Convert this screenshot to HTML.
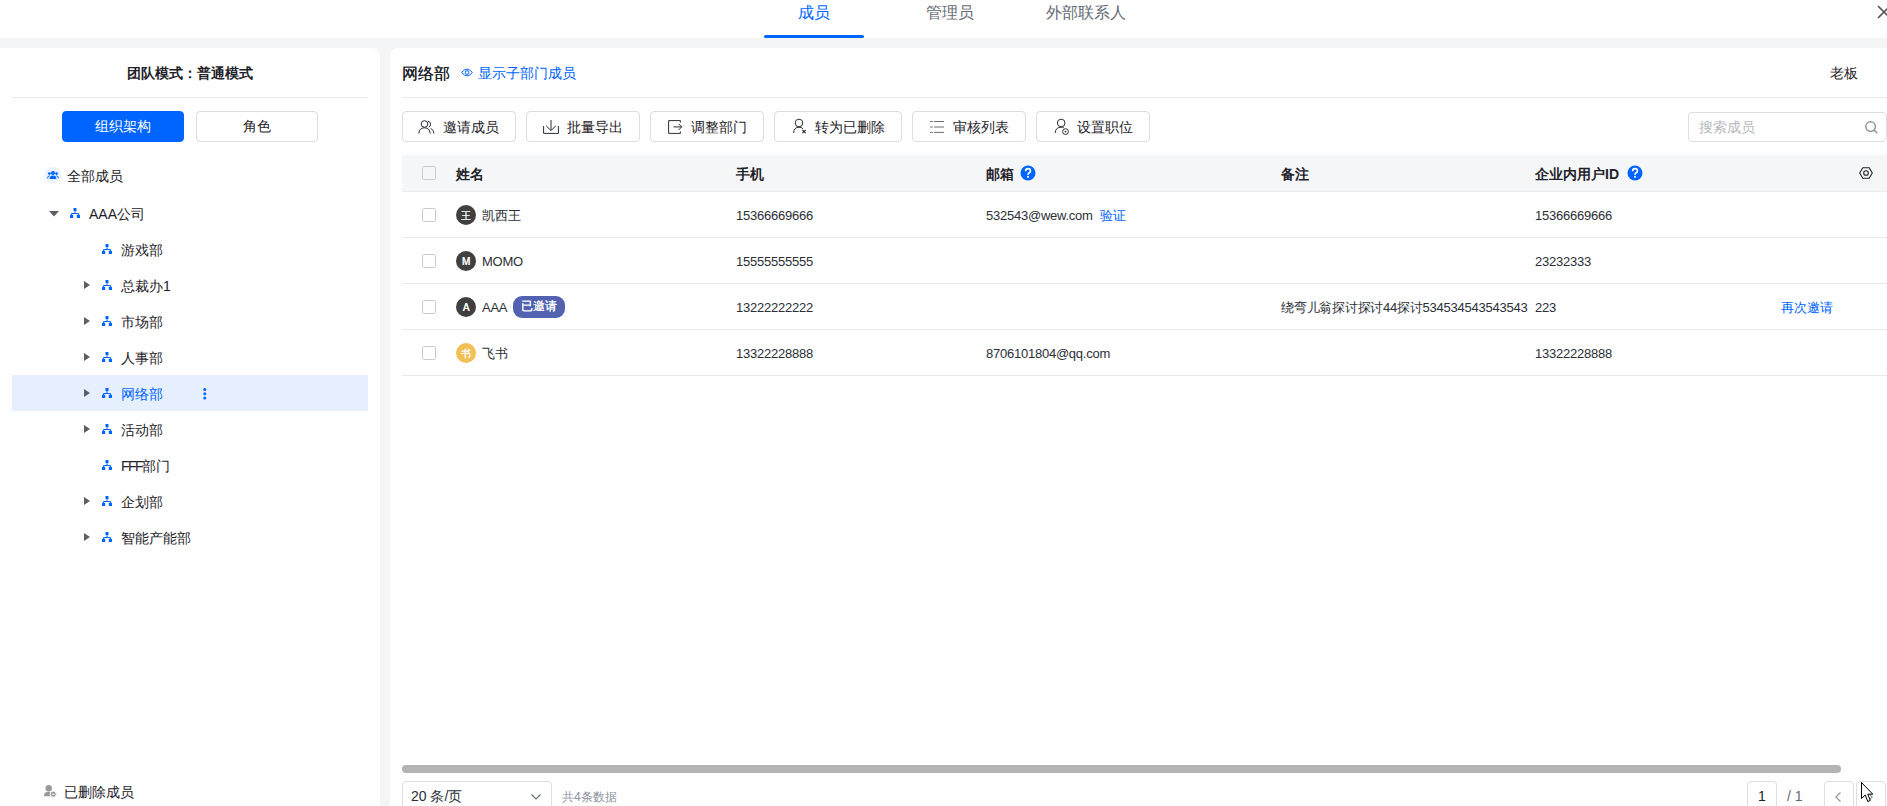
<!DOCTYPE html>
<html><head><meta charset="utf-8">
<style>
*{box-sizing:border-box;margin:0;padding:0}
html,body{width:1887px;height:806px;overflow:hidden;background:#f4f5f7;font-family:"Liberation Sans",sans-serif;color:#1f2329}
#top{position:absolute;left:0;top:0;width:1887px;height:38px;background:#fefefe}
.tab{position:absolute;top:2px;font-size:16px;line-height:22px;color:#646a73;white-space:nowrap}
.tab.on{color:#0064ff}
#uline{position:absolute;left:764px;top:35px;width:100px;height:3px;border-radius:2px;background:#0064ff}
#left{position:absolute;left:0;top:48px;width:380px;height:758px;background:#fefefe;border-radius:0 8px 0 0}
#right{position:absolute;left:390px;top:48px;width:1497px;height:758px;background:#fefefe;border-radius:8px 0 0 0}
.t{position:absolute;white-space:nowrap;line-height:20px;font-size:14px}
.hl{position:absolute;background:#e6effd}
.line{position:absolute;height:1px;background:#e9e9ea}
.btn{position:absolute;height:31px;border:1px solid #dcdde0;border-radius:4px;background:#fefefe}
svg{position:absolute;overflow:visible}
.org{width:10px;height:10px}
.caret-r{position:absolute;width:0;height:0;border-top:4.5px solid transparent;border-bottom:4.5px solid transparent;border-left:6px solid #5c5f66}
.cb{position:absolute;width:14px;height:14px;border:1.3px solid #cdcac8;border-radius:1.5px}
.av{position:absolute;width:20px;height:20px;border-radius:50%;background:#3f3f3f;color:#fff;font-size:10px;line-height:21px;text-align:center;text-shadow:0.4px 0 0 #fff}
.cell{position:absolute;white-space:nowrap;font-size:13px;line-height:20px;color:#2b2f36;letter-spacing:-0.24px}
.th{position:absolute;white-space:nowrap;font-size:14px;line-height:20px;font-weight:bold;color:#1f2329}
.blue{color:#0064ff}
</style></head><body>
<!-- top tabs -->
<div id="top">
  <div class="tab on" style="left:798px">成员</div>
  <div class="tab" style="left:926px">管理员</div>
  <div class="tab" style="left:1046px">外部联系人</div>
  <div id="uline"></div>
  <svg style="left:1878px;top:6px" width="12" height="12" viewBox="0 0 12 12"><path d="M0.5 0.5L11.5 11.5M11.5 0.5L0.5 11.5" stroke="#4e5358" stroke-width="1.7" stroke-linecap="round"/></svg>
</div>

<!-- LEFT PANEL -->
<div id="left"></div>
<div class="t" style="left:127px;top:63px;font-weight:bold">团队模式：普通模式</div>
<div class="line" style="left:12px;top:97px;width:356px"></div>
<div class="btn" style="left:62px;top:111px;width:122px;background:#0064ff;border-color:#0064ff"></div>
<div class="t" style="left:95px;top:116px;color:#fff">组织架构</div>
<div class="btn" style="left:196px;top:111px;width:122px"></div>
<div class="t" style="left:243px;top:116px">角色</div>

<!-- tree -->
<div class="hl" style="left:12px;top:375px;width:356px;height:36px"></div>

<div style="position:absolute;left:45px;top:167px;width:16px;height:16px;border-radius:50%;background:#e9f2ff"></div>
<svg style="left:47px;top:171px" width="12" height="8" viewBox="0 0 12 8"><circle cx="6" cy="2" r="2" fill="#0064ff"/><circle cx="2.4" cy="2.6" r="1.4" fill="#0064ff"/><circle cx="9.6" cy="2.6" r="1.4" fill="#0064ff"/><path d="M2.6 8Q2.6 4.6 6 4.6Q9.4 4.6 9.4 8Z" fill="#0064ff"/><path d="M0.5 7.3Q0.6 5 2.6 4.8M11.5 7.3Q11.4 5 9.4 4.8" stroke="#0064ff" stroke-width="1" fill="none"/></svg>
<div class="t" style="left:67px;top:166px">全部成员</div>

<svg style="left:49px;top:211px" width="10" height="6" viewBox="0 0 10 6"><path d="M0 0H10L5 5.5Z" fill="#5c5f66"/></svg>
<svg class="org" style="left:70px;top:208px" viewBox="0 0 10 10"><rect x="3.5" y="0" width="3" height="3" fill="#0064ff"/><rect x="0" y="6.8" width="3.2" height="3.2" fill="#0064ff"/><rect x="6.8" y="6.8" width="3.2" height="3.2" fill="#0064ff"/><path d="M5 3V5.5M1.6 7V5.5H8.4V7" stroke="#0064ff" stroke-width="1" fill="none"/></svg>
<div class="t" style="left:89px;top:204px">AAA公司</div>

<svg class="org" style="left:102px;top:244px" viewBox="0 0 10 10"><rect x="3.5" y="0" width="3" height="3" fill="#0064ff"/><rect x="0" y="6.8" width="3.2" height="3.2" fill="#0064ff"/><rect x="6.8" y="6.8" width="3.2" height="3.2" fill="#0064ff"/><path d="M5 3V5.5M1.6 7V5.5H8.4V7" stroke="#0064ff" stroke-width="1" fill="none"/></svg>
<div class="t" style="left:121px;top:240px">游戏部</div>
<div class="caret-r" style="left:84px;top:280.5px"></div>
<svg class="org" style="left:102px;top:280px" viewBox="0 0 10 10"><rect x="3.5" y="0" width="3" height="3" fill="#0064ff"/><rect x="0" y="6.8" width="3.2" height="3.2" fill="#0064ff"/><rect x="6.8" y="6.8" width="3.2" height="3.2" fill="#0064ff"/><path d="M5 3V5.5M1.6 7V5.5H8.4V7" stroke="#0064ff" stroke-width="1" fill="none"/></svg>
<div class="t" style="left:121px;top:276px">总裁办1</div>
<div class="caret-r" style="left:84px;top:316.5px"></div>
<svg class="org" style="left:102px;top:316px" viewBox="0 0 10 10"><rect x="3.5" y="0" width="3" height="3" fill="#0064ff"/><rect x="0" y="6.8" width="3.2" height="3.2" fill="#0064ff"/><rect x="6.8" y="6.8" width="3.2" height="3.2" fill="#0064ff"/><path d="M5 3V5.5M1.6 7V5.5H8.4V7" stroke="#0064ff" stroke-width="1" fill="none"/></svg>
<div class="t" style="left:121px;top:312px">市场部</div>
<div class="caret-r" style="left:84px;top:352.5px"></div>
<svg class="org" style="left:102px;top:352px" viewBox="0 0 10 10"><rect x="3.5" y="0" width="3" height="3" fill="#0064ff"/><rect x="0" y="6.8" width="3.2" height="3.2" fill="#0064ff"/><rect x="6.8" y="6.8" width="3.2" height="3.2" fill="#0064ff"/><path d="M5 3V5.5M1.6 7V5.5H8.4V7" stroke="#0064ff" stroke-width="1" fill="none"/></svg>
<div class="t" style="left:121px;top:348px">人事部</div>
<div class="caret-r" style="left:84px;top:388.5px"></div>
<svg class="org" style="left:102px;top:388px" viewBox="0 0 10 10"><rect x="3.5" y="0" width="3" height="3" fill="#0064ff"/><rect x="0" y="6.8" width="3.2" height="3.2" fill="#0064ff"/><rect x="6.8" y="6.8" width="3.2" height="3.2" fill="#0064ff"/><path d="M5 3V5.5M1.6 7V5.5H8.4V7" stroke="#0064ff" stroke-width="1" fill="none"/></svg>
<div class="t" style="left:121px;top:384px;color:#0064ff">网络部</div>
<div class="caret-r" style="left:84px;top:424.5px"></div>
<svg class="org" style="left:102px;top:424px" viewBox="0 0 10 10"><rect x="3.5" y="0" width="3" height="3" fill="#0064ff"/><rect x="0" y="6.8" width="3.2" height="3.2" fill="#0064ff"/><rect x="6.8" y="6.8" width="3.2" height="3.2" fill="#0064ff"/><path d="M5 3V5.5M1.6 7V5.5H8.4V7" stroke="#0064ff" stroke-width="1" fill="none"/></svg>
<div class="t" style="left:121px;top:420px">活动部</div>
<svg class="org" style="left:102px;top:460px" viewBox="0 0 10 10"><rect x="3.5" y="0" width="3" height="3" fill="#0064ff"/><rect x="0" y="6.8" width="3.2" height="3.2" fill="#0064ff"/><rect x="6.8" y="6.8" width="3.2" height="3.2" fill="#0064ff"/><path d="M5 3V5.5M1.6 7V5.5H8.4V7" stroke="#0064ff" stroke-width="1" fill="none"/></svg>
<div class="t" style="left:121px;top:456px"><span style="letter-spacing:-1.6px">FFF</span>部门</div>
<div class="caret-r" style="left:84px;top:496.5px"></div>
<svg class="org" style="left:102px;top:496px" viewBox="0 0 10 10"><rect x="3.5" y="0" width="3" height="3" fill="#0064ff"/><rect x="0" y="6.8" width="3.2" height="3.2" fill="#0064ff"/><rect x="6.8" y="6.8" width="3.2" height="3.2" fill="#0064ff"/><path d="M5 3V5.5M1.6 7V5.5H8.4V7" stroke="#0064ff" stroke-width="1" fill="none"/></svg>
<div class="t" style="left:121px;top:492px">企划部</div>
<div class="caret-r" style="left:84px;top:532.5px"></div>
<svg class="org" style="left:102px;top:532px" viewBox="0 0 10 10"><rect x="3.5" y="0" width="3" height="3" fill="#0064ff"/><rect x="0" y="6.8" width="3.2" height="3.2" fill="#0064ff"/><rect x="6.8" y="6.8" width="3.2" height="3.2" fill="#0064ff"/><path d="M5 3V5.5M1.6 7V5.5H8.4V7" stroke="#0064ff" stroke-width="1" fill="none"/></svg>
<div class="t" style="left:121px;top:528px">智能产能部</div>


<svg style="left:203px;top:388px" width="4" height="12" viewBox="0 0 4 12"><circle cx="1.75" cy="1.6" r="1.5" fill="#0064ff"/><circle cx="1.75" cy="5.8" r="1.5" fill="#0064ff"/><circle cx="1.75" cy="10" r="1.5" fill="#0064ff"/></svg>
<!-- deleted members -->
<svg style="left:43px;top:784px" width="14" height="14" viewBox="0 0 14 14"><circle cx="5.7" cy="4.2" r="3.2" fill="#9a9a9a"/><path d="M0.8 12.2Q1.2 7.8 5.7 7.8Q7.6 7.8 8.8 8.6L8.2 12.2Z" fill="#9a9a9a"/><circle cx="10.2" cy="10.2" r="3.1" fill="#9a9a9a" stroke="#fefefe" stroke-width="1"/><path d="M8.8 10.3H11.6" stroke="#fff" stroke-width="1"/></svg>
<div class="t" style="left:64px;top:782px">已删除成员</div>

<!-- RIGHT PANEL -->
<div id="right"></div>
<div class="t" style="left:402px;top:63px;font-size:16px;line-height:22px;text-shadow:0.45px 0 0 #1f2329">网络部</div>
<svg style="left:461px;top:68px" width="12" height="9" viewBox="0 0 12 9"><path d="M0.6 4.5Q6 -2.2 11.4 4.5Q6 11.2 0.6 4.5Z" stroke="#0064ff" stroke-width="1" fill="none"/><circle cx="6" cy="4.5" r="1.8" stroke="#0064ff" stroke-width="1" fill="none"/></svg>
<div class="t blue" style="left:478px;top:63px">显示子部门成员</div>
<div class="t" style="left:1830px;top:63px">老板</div>
<div class="line" style="left:402px;top:97px;width:1485px"></div>

<!-- toolbar -->
<div class="btn" style="left:402px;top:111px;width:114px"></div>
<svg style="left:418px;top:120px" width="18" height="14" viewBox="0 0 18 14"><circle cx="6.5" cy="4" r="3.3" stroke="#2b2e33" stroke-width="1" fill="none"/><path d="M0.8 13.5Q1.3 7.8 6.5 7.8Q11.7 7.8 12.2 13.5" stroke="#2b2e33" stroke-width="1" fill="none"/><path d="M9.8 1.2Q12.6 1.6 12.6 4.2Q12.6 6.3 10.8 7.2M12.6 8.4Q15.8 9.8 16 13.5" stroke="#2b2e33" stroke-width="1" fill="none"/></svg>
<div class="t" style="left:443px;top:117px">邀请成员</div>

<div class="btn" style="left:526px;top:111px;width:114px"></div>
<svg style="left:543px;top:120px" width="16" height="14" viewBox="0 0 16 14"><path d="M0.6 6V13.4H15.4V6" stroke="#2b2e33" stroke-width="1" fill="none"/><path d="M8 0V10.4M3.2 5.8L8 10.6L12.8 5.8" stroke="#2b2e33" stroke-width="1" fill="none"/></svg>
<div class="t" style="left:567px;top:117px">批量导出</div>

<div class="btn" style="left:650px;top:111px;width:114px"></div>
<svg style="left:668px;top:120px" width="15" height="14" viewBox="0 0 15 14"><path d="M12.4 2.5V0.6H0.6V13.4H12.4V11.5" stroke="#2b2e33" stroke-width="1" fill="none"/><path d="M5.5 6.9H13.6M10.6 3.8L13.7 6.9L10.6 10" stroke="#2b2e33" stroke-width="1" fill="none"/></svg>
<div class="t" style="left:691px;top:117px">调整部门</div>

<div class="btn" style="left:774px;top:111px;width:128px"></div>
<svg style="left:793px;top:119px" width="14" height="15" viewBox="0 0 14 15"><circle cx="6" cy="4" r="3.8" stroke="#2b2e33" stroke-width="1" fill="none"/><path d="M0.6 14Q0.9 8.2 6 8.2Q8.6 8.2 10 9.8" stroke="#2b2e33" stroke-width="1" fill="none"/><path d="M9.4 11L12.6 14.2M12.6 11L9.4 14.2" stroke="#2b2e33" stroke-width="1.2" fill="none"/></svg>
<div class="t" style="left:815px;top:117px">转为已删除</div>

<div class="btn" style="left:912px;top:111px;width:114px"></div>
<svg style="left:930px;top:120px" width="15" height="14" viewBox="0 0 15 14"><path d="M0 1.5H2.8M4 1.5H14M0 7H2.8M4 7H14M0 12.4H2.8M4 12.4H14" stroke="#6b6e75" stroke-width="1" fill="none"/></svg>
<div class="t" style="left:953px;top:117px">审核列表</div>

<div class="btn" style="left:1036px;top:111px;width:114px"></div>
<svg style="left:1054px;top:119px" width="16" height="16" viewBox="0 0 16 16"><circle cx="7.2" cy="4" r="3.8" stroke="#2b2e33" stroke-width="1" fill="none"/><path d="M1.2 14Q1.5 8.2 7.2 8.2Q8.6 8.2 9.8 8.8" stroke="#2b2e33" stroke-width="1" fill="none"/><circle cx="11.5" cy="12.6" r="2.9" stroke="#2b2e33" stroke-width="1" fill="none"/><circle cx="11.5" cy="12.6" r="0.9" fill="#2b2e33"/></svg>
<div class="t" style="left:1077px;top:117px">设置职位</div>

<!-- search -->
<div class="btn" style="left:1688px;top:112px;width:199px;height:30px;border-radius:4px 5px 5px 4px"></div>
<div class="t" style="left:1699px;top:117px;color:#b8babf">搜索成员</div>
<svg style="left:1865px;top:121px" width="13" height="13" viewBox="0 0 13 13"><circle cx="5.6" cy="5.6" r="4.8" stroke="#8f959e" stroke-width="1.5" fill="none"/><path d="M9.2 9.2L11.8 11.8" stroke="#8f959e" stroke-width="1.6" stroke-linecap="round"/></svg>

<!-- table header -->
<div style="position:absolute;left:402px;top:155px;width:1485px;height:37px;background:#f5f6f8;border-bottom:1px solid #ebebeb"></div>
<div class="cb" style="left:422px;top:166px"></div>
<div class="th" style="left:456px;top:164px">姓名</div>
<div class="th" style="left:736px;top:164px">手机</div>
<div class="th" style="left:986px;top:164px">邮箱</div>
<svg style="left:1020px;top:165px" width="16" height="16" viewBox="0 0 16 16"><circle cx="8" cy="8" r="7.5" fill="#0064ff"/><path d="M5.6 6.2Q5.6 3.6 8 3.6Q10.4 3.6 10.4 5.9Q10.4 7.3 8.9 8Q8 8.5 8 9.8" stroke="#fff" stroke-width="1.7" fill="none"/><rect x="7.1" y="10.9" width="1.8" height="1.8" fill="#fff"/></svg>
<div class="th" style="left:1281px;top:164px">备注</div>
<div class="th" style="left:1535px;top:164px">企业内用户ID</div>
<svg style="left:1627px;top:165px" width="16" height="16" viewBox="0 0 16 16"><circle cx="8" cy="8" r="7.5" fill="#0064ff"/><path d="M5.6 6.2Q5.6 3.6 8 3.6Q10.4 3.6 10.4 5.9Q10.4 7.3 8.9 8Q8 8.5 8 9.8" stroke="#fff" stroke-width="1.7" fill="none"/><rect x="7.1" y="10.9" width="1.8" height="1.8" fill="#fff"/></svg>
<svg style="left:1859px;top:167px" width="14" height="12" viewBox="0 0 14 12"><path d="M0.7 6L3.8 0.7H10.2L13.3 6L10.2 11.3H3.8Z" stroke="#1f2329" stroke-width="1.1" fill="none"/><circle cx="7" cy="6" r="2.3" stroke="#1f2329" stroke-width="1.1" fill="none"/></svg>

<div class="cb" style="left:422px;top:208px"></div>
<div class="av" style="left:456px;top:205px;background:#3f3f3f;font-size:10px">王</div>
<div class="cell" style="left:482px;top:206px;letter-spacing:0">凯西王</div>
<div class="cell" style="left:736px;top:206px">15366669666</div>
<div class="cell" style="left:986px;top:206px">532543@wew.com</div>
<div class="cell blue" style="left:1100px;top:206px;letter-spacing:0">验证</div>
<div class="cell" style="left:1535px;top:206px">15366669666</div>
<div class="line" style="left:402px;top:237px;width:1485px"></div>
<div class="cb" style="left:422px;top:254px"></div>
<div class="av" style="left:456px;top:251px;background:#3f3f3f;font-size:10px">M</div>
<div class="cell" style="left:482px;top:252px">MOMO</div>
<div class="cell" style="left:736px;top:252px">15555555555</div>
<div class="cell" style="left:1535px;top:252px">23232333</div>
<div class="line" style="left:402px;top:283px;width:1485px"></div>
<div class="cb" style="left:422px;top:300px"></div>
<div class="av" style="left:456px;top:297px;background:#3f3f3f;font-size:10px">A</div>
<div class="cell" style="left:482px;top:298px">AAA</div>
<div style="position:absolute;left:513px;top:296px;width:52px;height:22px;border-radius:9px;background:#5262b0;color:#fff;font-size:12px;line-height:21px;text-align:center;text-shadow:0.3px 0 0 #fff">已邀请</div>
<div class="cell" style="left:736px;top:298px">13222222222</div>
<div class="cell" style="left:1281px;top:298px">绕弯儿翁探讨探讨44探讨534534543543543</div>
<div class="cell" style="left:1535px;top:298px">223</div>
<div class="cell blue" style="left:1781px;top:298px;letter-spacing:0">再次邀请</div>
<div class="line" style="left:402px;top:329px;width:1485px"></div>
<div class="cb" style="left:422px;top:346px"></div>
<div class="av" style="left:456px;top:343px;background:#f2c055;font-size:10px">书</div>
<div class="cell" style="left:482px;top:344px;letter-spacing:0">飞书</div>
<div class="cell" style="left:736px;top:344px">13322228888</div>
<div class="cell" style="left:986px;top:344px">8706101804@qq.com</div>
<div class="cell" style="left:1535px;top:344px">13322228888</div>
<div class="line" style="left:402px;top:375px;width:1485px"></div>

<!-- scrollbar -->
<div style="position:absolute;left:402px;top:765px;width:1439px;height:8px;border-radius:4px;background:#b3b3b3"></div>
<!-- pagination -->
<div class="btn" style="left:402px;top:781px;width:150px;height:40px"></div>
<div class="t" style="left:411px;top:786px;color:#2b2f36">20 条/页</div>
<svg style="left:531px;top:794px" width="10" height="6" viewBox="0 0 10 6"><path d="M0.5 0.5L5 5L9.5 0.5" stroke="#646a73" stroke-width="1.1" fill="none"/></svg>
<div class="t" style="left:562px;top:787px;font-size:12px;color:#8f959e">共4条数据</div>
<div class="btn" style="left:1747px;top:781px;width:30px;height:40px"></div>
<div class="t" style="left:1758px;top:786px">1</div>
<div class="t" style="left:1787px;top:786px;color:#646a73">/ 1</div>
<div class="btn" style="left:1824px;top:781px;width:30px;height:40px"></div>
<svg style="left:1835px;top:792px" width="6" height="10" viewBox="0 0 6 10"><path d="M5.5 0.5L0.8 5L5.5 9.5" stroke="#8f959e" stroke-width="1.1" fill="none"/></svg>
<div class="btn" style="left:1856px;top:781px;width:30px;height:40px"></div>
<svg style="left:1867px;top:792px" width="6" height="10" viewBox="0 0 6 10"><path d="M0.5 0.5L5.2 5L0.5 9.5" stroke="#8f959e" stroke-width="1.1" fill="none"/></svg>
<!-- cursor -->
<svg style="left:1861px;top:782px" width="14" height="21" viewBox="0 0 14 21"><path d="M0.5 0.5V16.5L4.2 13L6.8 19.5L9.3 18.4L6.7 12.2H11.8Z" fill="#fff" stroke="#000" stroke-width="1"/></svg>
</body></html>
